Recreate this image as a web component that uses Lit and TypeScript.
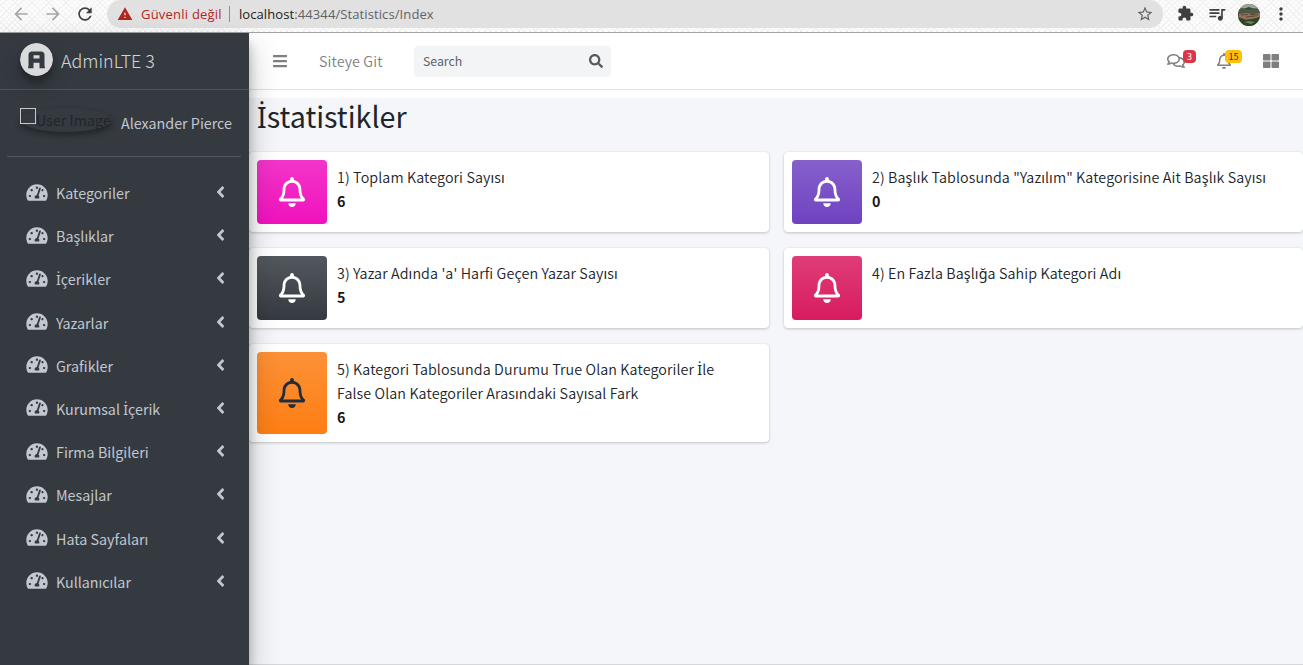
import { LitElement, html, css, svg } from "lit";
import { customElement, property } from "lit/decorators.js";

const ICONS: Record<string, [string, string]> = {
  bars: ["0 0 448 512", "M16 132h416c8.837 0 16-7.163 16-16V76c0-8.837-7.163-16-16-16H16C7.163 60 0 67.163 0 76v40c0 8.837 7.163 16 16 16zm0 160h416c8.837 0 16-7.163 16-16v-40c0-8.837-7.163-16-16-16H16c-8.837 0-16 7.163-16 16v40c0 8.837 7.163 16 16 16zm0 160h416c8.837 0 16-7.163 16-16v-40c0-8.837-7.163-16-16-16H16c-8.837 0-16 7.163-16 16v40c0 8.837 7.163 16 16 16z"],
  search: ["0 0 512 512", "M505 442.7L405.3 343c-4.5-4.5-10.6-7-17-7H372c27.6-35.3 44-79.7 44-128C416 93.1 322.9 0 208 0S0 93.1 0 208s93.1 208 208 208c48.3 0 92.7-16.4 128-44v16.3c0 6.4 2.5 12.5 7 17l99.7 99.7c9.4 9.4 24.6 9.4 33.9 0l28.3-28.3c9.4-9.4 9.4-24.6.1-34zM208 336c-70.7 0-128-57.2-128-128 0-70.7 57.2-128 128-128 70.7 0 128 57.2 128 128 0 70.7-57.2 128-128 128z"],
  bell: ["0 0 448 512", "M439.39 362.29c-19.32-20.76-55.47-51.99-55.47-154.29 0-77.7-54.48-139.9-127.94-155.16V32c0-17.67-14.32-32-31.98-32s-31.98 14.33-31.98 32v20.84C118.56 68.1 64.08 130.3 64.08 208c0 102.3-36.15 133.53-55.47 154.29-6 6.45-8.66 14.16-8.61 21.71.11 16.4 12.98 32 32.1 32h383.8c19.12 0 32-15.6 32.1-32 .05-7.55-2.61-15.27-8.61-21.71zM67.53 368c21.22-27.97 44.42-74.33 44.53-159.42 0-.2-.06-.38-.06-.58 0-61.86 50.14-112 112-112s112 50.14 112 112c0 .2-.06.38-.06.58.11 85.1 23.31 131.46 44.53 159.42H67.53zM224 512c35.32 0 63.97-28.65 63.97-64H160.03c0 35.35 28.65 64 63.97 64z"],
  tachometer: ["0 0 576 512", "M288 32C128.94 32 0 160.94 0 320c0 52.8 14.25 102.26 39.06 144.8 5.61 9.62 16.3 15.2 27.44 15.2h443c11.14 0 21.83-5.58 27.44-15.2C561.75 422.26 576 372.8 576 320c0-159.06-128.94-288-288-288zm0 64c14.71 0 26.58 10.13 30.32 23.65-1.11 2.26-2.64 4.23-3.45 6.67l-9.22 27.67c-5.13 3.49-10.97 6.01-17.64 6.01-17.67 0-32-14.33-32-32S270.33 96 288 96zM96 384c-17.67 0-32-14.33-32-32s14.33-32 32-32 32 14.33 32 32-14.33 32-32 32zm48-160c-17.67 0-32-14.33-32-32s14.33-32 32-32 32 14.33 32 32-14.33 32-32 32zm246.77-72.41l-61.33 184C343.13 347.33 352 364.54 352 384c0 11.72-3.38 22.55-8.88 32H232.88c-5.5-9.45-8.88-20.28-8.88-32 0-33.94 26.5-61.43 59.9-63.59l61.34-184.01c4.17-12.56 17.73-19.45 30.36-15.17 12.57 4.19 19.35 17.79 15.17 30.36zm14.66 57.2l15.52-46.55c3.47-1.29 7.13-2.23 11.05-2.23 17.67 0 32 14.33 32 32s-14.33 32-32 32c-11.38-.01-20.89-6.28-26.57-15.22zM480 384c-17.67 0-32-14.33-32-32s14.33-32 32-32 32 14.33 32 32-14.33 32-32 32z"],
  angle: ["0 0 256 512", "M31.7 239l136-136c9.4-9.4 24.6-9.4 33.9 0l22.6 22.6c9.4 9.4 9.4 24.6 0 33.9L127.9 256l96.4 96.4c9.4 9.4 9.4 24.6 0 33.9L201.7 409c-9.4 9.4-24.6 9.4-33.9 0l-136-136c-9.5-9.4-9.5-24.6-.1-34z"],
  grid: ["0 0 512 512", "M296 32h192c13.255 0 24 10.745 24 24v160c0 13.255-10.745 24-24 24H296c-13.255 0-24-10.745-24-24V56c0-13.255 10.745-24 24-24zm-80 0H24C10.745 32 0 42.745 0 56v160c0 13.255 10.745 24 24 24h192c13.255 0 24-10.745 24-24V56c0-13.255-10.745-24-24-24zM0 296v160c0 13.255 10.745 24 24 24h192c13.255 0 24-10.745 24-24V296c0-13.255-10.745-24-24-24H24c-13.255 0-24 10.745-24 24zm296 184h192c13.255 0 24-10.745 24-24V296c0-13.255-10.745-24-24-24H296c-13.255 0-24 10.745-24 24v160c0 13.255 10.745 24 24 24z"],
  comments: ["0 0 576 512", "M532 386.2c27.5-27.1 44-61.1 44-98.2 0-80-76.5-146.1-176.2-157.9C368.3 72.5 294.3 32 208 32 93.1 32 0 103.6 0 192c0 37 16.5 71 44 98.2-15.3 30.7-37.3 54.5-37.7 54.9-6.3 6.7-8.1 16.5-4.4 25 3.6 8.5 12 14 21.2 14 53.5 0 96.7-20.2 125.2-38.8 9.2 2.1 18.7 3.7 28.4 4.9C208.1 407.6 281.8 448 368 448c20.8 0 40.8-2.4 59.8-6.8C456.3 459.7 499.4 480 553 480c9.2 0 17.5-5.5 21.2-14 3.6-8.5 1.9-18.3-4.4-25-.4-.3-22.5-24.1-37.8-54.8zm-392.8-92.3L122.1 305c-14.1 9.1-28.5 16.3-43.1 21.4 2.7-4.7 5.4-9.7 8-14.8l15.5-31.1L77.7 256C64.2 242.6 48 220.7 48 192c0-60.7 73.3-112 160-112s160 51.3 160 112-73.3 112-160 112c-16.5 0-33-1.9-49-5.6l-19.8-4.5zM498.3 352l-24.7 24.4 15.5 31.1c2.6 5.1 5.3 10.1 8 14.8-14.6-5.1-29-12.3-43.1-21.4l-17.1-11.1-19.9 4.6c-16 3.7-32.5 5.6-49 5.6-54 0-102.2-20.1-131.3-49.7C338 339.5 416 272.9 416 192c0-3.4-.4-6.7-.7-10C479.7 196.5 528 238.8 528 288c0 28.7-16.2 50.6-29.7 64z"],
  back: ["0 0 24 24", "M20 11H7.83l5.59-5.59L12 4l-8 8 8 8 1.41-1.41L7.83 13H20v-2z"],
  forward: ["0 0 24 24", "M12 4l-1.41 1.41L16.17 11H4v2h12.17l-5.58 5.59L12 20l8-8z"],
  reload: ["0 0 24 24", "M17.65 6.35C16.2 4.9 14.21 4 12 4c-4.42 0-7.99 3.58-7.99 8s3.57 8 7.99 8c3.73 0 6.84-2.55 7.73-6h-2.08c-.82 2.33-3.04 4-5.65 4-3.31 0-6-2.69-6-6s2.69-6 6-6c1.66 0 3.14.69 4.22 1.78L13 11h7V4l-2.35 2.35z"],
  warning: ["0 0 24 24", "M1 21h22L12 2 1 21zm12-3h-2v-2h2v2zm0-4h-2v-4h2v4z"],
  star: ["0 0 24 24", "M22 9.24l-7.19-.62L12 2 9.19 8.63 2 9.24l5.46 4.73L5.82 21 12 17.27 18.18 21l-1.63-7.03L22 9.24zM12 15.4l-3.76 2.27 1-4.28-3.32-2.88 4.38-.38L12 6.1l1.71 4.04 4.38.38-3.32 2.88 1 4.28L12 15.4z"],
  extension: ["0 0 24 24", "M20.5 11H19V7c0-1.1-.9-2-2-2h-4V3.5C13 2.12 11.88 1 10.5 1S8 2.12 8 3.5V5H4c-1.1 0-1.99.9-1.99 2v3.8H3.5c1.49 0 2.7 1.21 2.7 2.7s-1.21 2.7-2.7 2.7H2V20c0 1.1.9 2 2 2h3.8v-1.5c0-1.49 1.21-2.7 2.7-2.7 1.49 0 2.7 1.21 2.7 2.7V22H17c1.1 0 2-.9 2-2v-4h1.5c1.38 0 2.5-1.12 2.5-2.5S21.88 11 20.5 11z"],
  music: ["0 0 24 24", "M15 6H3v2h12V6zm0 4H3v2h12v-2zM3 16h8v-2H3v2zM17 6v8.18c-.31-.11-.65-.18-1-.18-1.66 0-3 1.34-3 3s1.34 3 3 3 3-1.34 3-3V8h3V6h-5z"],
  more: ["0 0 24 24", "M12 8c1.1 0 2-.9 2-2s-.9-2-2-2-2 .9-2 2 .9 2 2 2zm0 2c-1.1 0-2 .9-2 2s.9 2 2 2 2-.9 2-2-.9-2-2-2zm0 6c-1.1 0-2 .9-2 2s.9 2 2 2 2-.9 2-2-.9-2-2-2z"],
};

@customElement("ui-icon")
class UiIcon extends LitElement {
  @property() name = "";
  static styles = css`
    :host { display: inline-flex; flex: none; }
    svg { width: 100%; height: 100%; fill: currentColor; display: block; }
  `;
  render() {
    const [box, d] = ICONS[this.name];
    return html`<svg viewBox=${box}>${svg`<path d=${d}></path>`}</svg>`;
  }
}

const MENU = ["Kategoriler", "Başlıklar", "İçerikler", "Yazarlar", "Grafikler", "Kurumsal İçerik", "Firma Bilgileri", "Mesajlar", "Hata Sayfaları", "Kullanıcılar"];

const STATS = [
  { tone: "pink", text: "1) Toplam Kategori Sayısı", value: "6" },
  { tone: "purple", text: "2) Başlık Tablosunda \"Yazılım\" Kategorisine Ait Başlık Sayısı", value: "0" },
  { tone: "dark", text: "3) Yazar Adında 'a' Harfi Geçen Yazar Sayısı", value: "5" },
  { tone: "red", text: "4) En Fazla Başlığa Sahip Kategori Adı", value: "" },
  { tone: "orange", text: "5) Kategori Tablosunda Durumu True Olan Kategoriler İle False Olan Kategoriler Arasındaki Sayısal Fark", value: "6" },
];

const tr = (text: string) =>
  text.split(/(\s+|[İışğ])/).map((part) => (/^[İışğ]$/.test(part) ? html`<span class="turkish">${part}</span>` : part));

@customElement("app-root")
class AppRoot extends LitElement {
  static styles = css`
    :host {
      display: flex; flex-direction: column; width: 1303px; height: 665px; overflow: hidden;
      font-family: "Noto Sans CJK SC", "Noto Sans", sans-serif; font-size: 14.3px; line-height: 24px;
      color: #212529; background: #fff; box-sizing: border-box;
    }
    *, *::before { box-sizing: border-box; }
    .turkish { font-family: "Noto Sans", sans-serif; font-weight: 400; line-height: 1; }

    .chrome {
      flex: none; height: 33px; display: flex; align-items: flex-start; border-bottom: 1px solid #a3a3a3;
      background:
        repeating-linear-gradient(45deg, transparent 0 3px, #f1f1f1 3px 4px),
        repeating-linear-gradient(-45deg, #fdfdfd 0 3px, #f1f1f1 3px 4px);
      color: #3c4043; padding-left: 10px;
    }
    .chrome > ui-icon { width: 20px; height: 20px; margin-top: 4px; }
    .chrome .dim { color: #a6a6a6; }
    .chrome .back { margin-right: 12px; margin-left: 1px; }
    .chrome .fwd { margin-right: 12px; }
    .chrome .reload { margin-right: 12px; }
    .omnibox {
      display: flex; align-items: center; width: 1056px; height: 28px; background: #e1e1e1;
      padding: 0 9px 0 10px; border-radius: 14px; font-family: "Open Sans", sans-serif; font-size: 13px;
    }
    .omnibox .warn { width: 16px; height: 16px; color: #b3261e; margin-right: 8px; }
    .insecure { color: #b3261e; letter-spacing: .22px; }
    .bar { width: 1px; height: 16px; background: #8f8f8f; margin: 0 9px 0 7px; }
    .host { color: #202124; letter-spacing: .1px; }
    .path { color: #5f6368; flex: 1; letter-spacing: .1px; }
    .omnibox .star { width: 18px; height: 18px; color: #5f6368; }
    .chrome .ext { width: 17px; height: 17px; margin: 5px 13px 0 14px; }
    .chrome .music { width: 20px; height: 20px; margin: 4px 11px 0 0; }
    .avatar { width: 22px; height: 22px; margin: 4px 11px 0 0; flex: none; }
    .chrome .more { width: 20px; height: 20px; }

    .page { flex: 1; display: flex; min-height: 0; border-bottom: 1px solid #d5d7da; }

    .sidebar {
      width: 249px; flex: none; background: #343a40; color: #c2c7d0; position: relative; z-index: 2;
      box-shadow: 0 14px 28px rgba(0,0,0,.25), 0 10px 10px rgba(0,0,0,.22);
      display: flex; flex-direction: column; height: 632px;
    }
    .brand { height: 57px; border-bottom: 1px solid #4b545c; display: flex; align-items: center; padding-left: 20px; }
    .logo { width: 33px; height: 33px; margin: -4px 8px 0 0; border-radius: 50%; box-shadow: 0 10px 20px rgba(0,0,0,.19), 0 6px 6px rgba(0,0,0,.23); }
    .brand-name { font-size: 17.9px; font-weight: 300; color: rgba(255,255,255,.8); margin-top: -2px; }
    .user { margin: 0 8px 0 7px; height: 67px; border-bottom: 1px solid #4f5962; display: flex; padding-left: 13px; }
    .photo {
      width: 92px; height: 24px; margin-top: 18px; border-radius: 50%; display: flex; align-items: flex-start;
      box-shadow: 0 3px 6px rgba(0,0,0,.16), 0 3px 6px rgba(0,0,0,.23); color: #212529; white-space: nowrap;
    }
    .photo .box { width: 16px; height: 16px; border: 1px solid #c6c8ca; flex: none; }
    .user-name { margin: 21px 0 0 9px; white-space: nowrap; }
    .menu { display: flex; flex-direction: column; gap: 3.2px; padding-top: 16px; }
    .item { height: 40px; display: flex; align-items: center; padding: 0 20px 0 26px; }
    .item .tach { width: 22px; height: 19px; margin: -2px 8px 0 0; }
    .item .label { flex: 1; }
    .item .arrow { width: 9px; height: 18px; margin: -2px 4px 0 0; }

    .main { flex: 1; display: flex; flex-direction: column; min-width: 0; background: #f4f6f9; }
    .navbar { height: 57px; flex: none; background: #fff; border-bottom: 1px solid #dee2e6; display: flex; align-items: center; padding: 0 24px; color: #7f7f7f; }
    .navbar .bars { width: 14px; height: 16px; margin-right: 32px; }
    .site { width: 95px; font-weight: 350; letter-spacing: .1px; }
    .search { width: 197px; height: 31px; background: #f2f4f6; border-radius: 4px; display: flex; align-items: center; justify-content: space-between; padding: 0 8px 0 9px; font-size: 12.3px; color: #5b6268; }
    .search ui-icon { width: 14px; height: 14px; color: #565a5e; }
    .tools { margin-left: auto; display: flex; align-items: center; gap: 32px; }
    .tool { position: relative; display: flex; }
    .tool .comments { width: 18px; height: 16px; }
    .tool .bell { width: 14px; height: 16px; }
    .tool .grid { width: 16px; height: 16px; }
    .badge { position: absolute; font-size: 9px; line-height: 13px; text-align: center; border-radius: 4px; height: 13px; }
    .badge.danger { background: #dc3545; color: #fff; left: 16px; top: -3px; width: 13px; }
    .badge.warning { background: #ffc107; color: #1f2d3d; left: 8px; top: -3px; width: 17px; }

    .strip { height: 8px; background: #fff; flex: none; }
    .title { margin: -1px 0 0 8px; font-size: 28.7px; line-height: 38px; font-weight: 400; height: 55px; }
    .cards { display: grid; grid-template-columns: 520px 519px; column-gap: 15px; row-gap: 16px; }
    .card { background: #fff; border-radius: 4px; padding: 8px; min-height: 80px; display: flex; box-shadow: 0 0 1px rgba(0,0,0,.125), 0 1px 3px rgba(0,0,0,.2); }
    .tile { width: 70px; border-radius: 4px; display: flex; align-items: center; justify-content: center; color: #fff; flex: none; }
    .tile ui-icon { width: 28px; height: 30px; margin-right: 1px; }
    .pink { background: linear-gradient(180deg, #f335c9, #f012be); }
    .purple { background: linear-gradient(180deg, #8660cb, #6f42c1); }
    .dark { background: linear-gradient(180deg, #52585d, #343a40); }
    .red { background: linear-gradient(180deg, #df3d78, #d81b60); }
    .orange { background: linear-gradient(180deg, #fd9137, #fd7e14); color: #1f2d3d; }
    .body { padding: 5px 8px 5px 10px; flex: 1; }
    .desc { font-weight: 350; letter-spacing: .1px; max-width: 398px; }
    .value { font-weight: 700; min-height: 24px; color: #16191c; }
  `;

  render() {
    return html`
      <div class="chrome">
        <ui-icon class="dim back" name="back"></ui-icon>
        <ui-icon class="dim fwd" name="forward"></ui-icon>
        <ui-icon class="reload" name="reload"></ui-icon>
        <div class="omnibox">
          <ui-icon class="warn" name="warning"></ui-icon>
          <span class="insecure">Güvenli değil</span>
          <span class="bar"></span>
          <span class="host">localhost</span><span class="path">:44344/Statistics/Index</span>
          <ui-icon class="star" name="star"></ui-icon>
        </div>
        <ui-icon class="ext" name="extension"></ui-icon>
        <ui-icon class="music" name="music"></ui-icon>
        <svg class="avatar" viewBox="0 0 22 22">
          <clipPath id="round"><circle cx="11" cy="11" r="11"></circle></clipPath>
          <g clip-path="url(#round)">
            <rect width="22" height="22" fill="#3a4630"></rect>
            <path d="M0 0h22v4l-6 1-5-2-6 2-5-1z" fill="#9aa49f"></path>
            <path d="M0 5l5-1 5 2 6-2 6 2v4H0z" fill="#4b5842"></path>
            <path d="M1 10l8-1 6 1 7-1v4l-6 2-8 1-7-3z" fill="#96705a"></path>
            <path d="M3 11l7-.5M8 13l9-1M12 10.5l8 .5" stroke="#5c4a38" fill="none"></path>
            <path d="M0 14l6 2 8-1 8-2v9H0z" fill="#2f4424"></path>
            <path d="M6 18l5-1 6 1-4 2z" fill="#6c8355"></path>
          </g>
        </svg>
        <ui-icon class="more" name="more"></ui-icon>
      </div>
      <div class="page">
        <aside class="sidebar">
          <div class="brand">
            <svg class="logo" viewBox="0 0 33 33">
              <circle cx="16.5" cy="16.5" r="16.5" fill="#d9dadb"></circle>
              <path fill="#343a40" fill-rule="evenodd" d="M12 8.5h9q3.500 0 3.500 3.500v11l.7 2.300h-5.700v-5.500h-6v5.500H7.800l.7-2.300V12q0-3.500 3.500-3.500zM13.500 12.300v3.200h6v-3.200z"></path>
            </svg>
            <span class="brand-name">AdminLTE 3</span>
          </div>
          <div class="user">
            <div class="photo"><span class="box"></span><span>User Image</span></div>
            <span class="user-name">Alexander Pierce</span>
          </div>
          <nav class="menu">
            ${MENU.map((m) => html`<div class="item">
              <ui-icon class="tach" name="tachometer"></ui-icon>
              <span class="label">${tr(m)}</span>
              <ui-icon class="arrow" name="angle"></ui-icon>
            </div>`)}
          </nav>
        </aside>
        <main class="main">
          <header class="navbar">
            <ui-icon class="bars" name="bars"></ui-icon>
            <span class="site">Siteye Git</span>
            <div class="search"><span>Search</span><ui-icon name="search"></ui-icon></div>
            <div class="tools">
              <div class="tool"><ui-icon class="comments" name="comments"></ui-icon><span class="badge danger">3</span></div>
              <div class="tool"><ui-icon class="bell" name="bell"></ui-icon><span class="badge warning">15</span></div>
              <div class="tool"><ui-icon class="grid" name="grid"></ui-icon></div>
            </div>
          </header>
          <div class="strip"></div>
          <h1 class="title">${tr("İstatistikler")}</h1>
          <div class="cards">
            ${STATS.map((s) => html`<section class="card">
              <div class="tile ${s.tone}"><ui-icon name="bell"></ui-icon></div>
              <div class="body"><div class="desc">${tr(s.text)}</div><div class="value">${s.value}</div></div>
            </section>`)}
          </div>
        </main>
      </div>
    `;
  }
}
